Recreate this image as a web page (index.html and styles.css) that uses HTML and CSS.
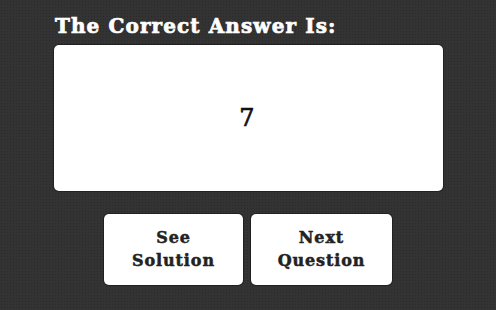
FILE: index.html
```html
<!DOCTYPE html>
<html>
<head>
<meta charset="utf-8">
<link rel="stylesheet" href="styles.css">
</head>
<body>
<main class="page">
  <h1 class="title">The Correct Answer Is:</h1>
  <div class="answer-box"><span class="answer">7</span></div>
  <div class="actions">
    <button class="btn btn-left">See<br>Solution</button>
    <button class="btn btn-right">Next<br>Question</button>
  </div>
</main>
</body>
</html>
```
FILE: styles.css
```css
html, body {
  margin: 0;
  padding: 0;
}
body {
  width: 496px;
  height: 310px;
  overflow: hidden;
  background-color: #333333;
  background-image: radial-gradient(rgba(0,0,0,0.18) 0.6px, transparent 0.9px);
  background-size: 3px 3px;
  font-family: "DejaVu Serif", serif;
}
.page {
  display: flex;
  flex-direction: column;
  padding: 0 53px 0 54px;
}
.title {
  margin: 13px 0 0 1px;
  height: 32px;
  font-size: 20px;
  line-height: 26px;
  font-weight: bold;
  color: #ffffff;
  letter-spacing: 1.1px;
  -webkit-text-stroke: 0.7px #ffffff;
}
.answer-box {
  width: 389px;
  height: 146px;
  background: #ffffff;
  border-radius: 5px;
  box-shadow: 0 0 0 1px rgba(0,0,0,0.35);
  display: flex;
  align-items: center;
  justify-content: center;
}
.answer {
  font-family: "DejaVu Serif", serif;
  font-size: 24px;
  color: #111111;
  margin-left: -3px;
  margin-top: -1px;
  -webkit-text-stroke: 0.7px #111111;
}
.actions {
  display: flex;
  gap: 8px;
  margin: 23px 0 0 50px;
}
.btn {
  width: 139px;
  height: 71px;
  border: none;
  padding: 0 0 2px 0;
  background: #ffffff;
  border-radius: 5px;
  box-shadow: 0 0 0 1px rgba(0,0,0,0.35);
  font-family: "DejaVu Serif", serif;
  font-weight: bold;
  font-size: 16px;
  line-height: 23px;
  letter-spacing: 0.9px;
  color: #222222;
  text-align: center;
  -webkit-text-stroke: 0.5px #222222;
}
.btn-right {
  width: 141px;
}
```
